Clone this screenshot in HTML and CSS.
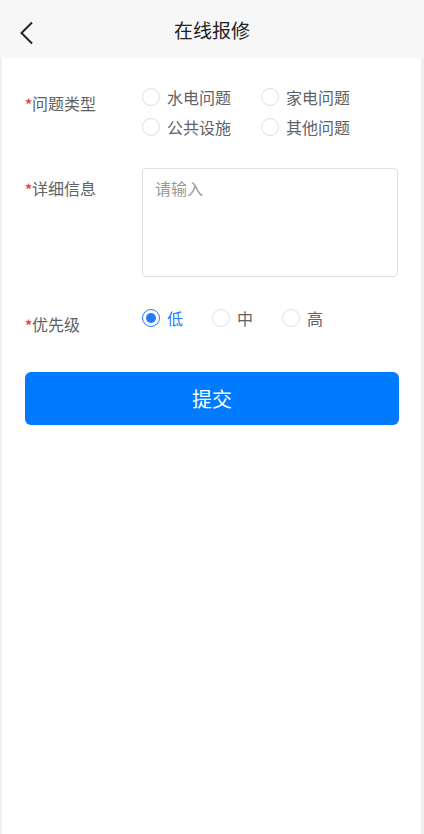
FILE: index.html
```html
<!DOCTYPE html>
<html>
<head>
    <title>在线报修</title>
    <meta name="viewport" content="width=device-width, initial-scale=1.0">
    <link rel="stylesheet" href="styles.css">
</head>
<body>
    <header class="nav">
        <a class="nav-back" href="#">
            <svg width="14" height="24" viewBox="0 0 14 24">
                <polyline points="12,1.5 1.5,12 12,22.5" fill="none" stroke="#222" stroke-width="2"/>
            </svg>
        </a>
        <h1 class="nav-title">在线报修</h1>
    </header>

    <main class="page">
        <form class="repair-form">
            <div class="form-item">
                <label class="form-label"><span class="req">*</span>问题类型</label>
                <div class="radio-grid">
                    <label class="radio"><span class="dot"></span>水电问题</label>
                    <label class="radio"><span class="dot"></span>家电问题</label>
                    <label class="radio"><span class="dot"></span>公共设施</label>
                    <label class="radio"><span class="dot"></span>其他问题</label>
                </div>
            </div>

            <div class="form-item">
                <label class="form-label"><span class="req">*</span>详细信息</label>
                <textarea class="textarea" placeholder="请输入"></textarea>
            </div>

            <div class="form-item">
                <label class="form-label"><span class="req">*</span>优先级</label>
                <div class="radio-row">
                    <label class="radio checked"><span class="dot"></span>低</label>
                    <label class="radio"><span class="dot"></span>中</label>
                    <label class="radio"><span class="dot"></span>高</label>
                </div>
            </div>

            <button type="button" class="submit">提交</button>
        </form>
    </main>
</body>
</html>
```

FILE: styles.css
```css
body {
    margin: 0;
    background-color: #f0f0f0;
    font-family: "Noto Sans CJK SC", "Noto Sans", sans-serif;
    color: #333;
}

/* top bar */
.nav {
    height: 58px;
    background-color: #f7f7f7;
    display: flex;
    align-items: center;
    justify-content: center;
    position: relative;
}

.nav-back {
    position: absolute;
    left: 20px;
    top: 21px;
    display: flex;
}

.nav-title {
    margin: 0;
    font-size: 19px;
    font-weight: normal;
    color: #222;
}

.page {
    margin: 0 3px 0 2px;
    background-color: #ffffff;
    min-height: 776px;
}

.repair-form {
    padding: 24px 23px 0 23px;
}

.form-item {
    display: flex;
    align-items: flex-start;
    margin-bottom: 26px;
}

.form-item:last-of-type {
    margin-bottom: 0;
}

.form-label {
    width: 117px;
    flex-shrink: 0;
    line-height: 42px;
    font-size: 16px;
    color: #606266;
}

.req {
    color: #e64340;
    font-size: 14px;
    font-weight: bold;
}

.form-item:nth-child(2) .form-label {
    line-height: 40px;
}

.radio-grid {
    display: grid;
    grid-template-columns: 119px 119px;
}

.radio-row {
    display: flex;
    gap: 29px;
}

.radio {
    display: flex;
    align-items: center;
    height: 30px;
    font-size: 16px;
    color: #606266;
}

.dot {
    width: 16px;
    height: 16px;
    border: 1px solid #dcdfe6;
    border-radius: 50%;
    margin-right: 7px;
    box-sizing: content-box;
    position: relative;
}

.radio.checked {
    color: #2979ff;
}

.radio.checked .dot {
    border-color: #2979ff;
}

.radio.checked .dot::after {
    content: "";
    position: absolute;
    left: 3px;
    top: 3px;
    width: 10px;
    height: 10px;
    border-radius: 50%;
    background-color: #2979ff;
}

.textarea {
    width: 258px;
    height: 109px;
    box-sizing: border-box;
    border: 1px solid #dcdfe6;
    border-radius: 4px;
    padding: 7px 12px;
    font-family: inherit;
    font-size: 16px;
    resize: none;
    margin: 0;
}

.textarea::placeholder {
    color: #999999;
}

.submit {
    display: block;
    width: 374px;
    height: 53px;
    margin-top: 26px;
    border: none;
    border-radius: 6px;
    background-color: #007aff;
    color: #ffffff;
    font-family: inherit;
    font-size: 20px;
}
```
